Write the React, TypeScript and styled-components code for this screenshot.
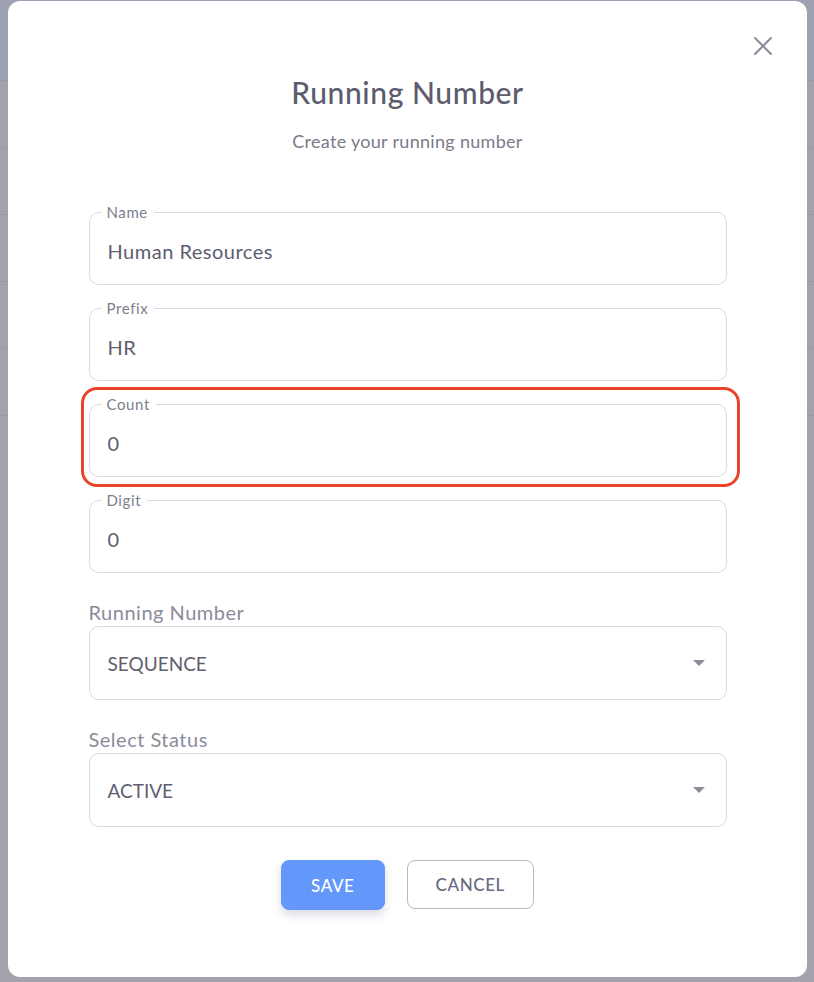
import * as React from "react";
import styled, { createGlobalStyle } from "styled-components";

const GlobalStyle = createGlobalStyle`
  html, body {
    margin: 0;
    padding: 0;
    background: #a2a3ad;
    font-family: Lato, "Noto Sans", sans-serif;
  }
  * { box-sizing: border-box; }
`;

const Page = styled.div`
  position: relative;
  width: 814px;
  height: 982px;
  overflow: hidden;
  background: #a2a3ad;
`;

const PageHeader = styled.div`
  height: 81px;
  background: #9ea1b1;
  border-bottom: 1px solid #979aa8;
`;

const PageRow = styled.div`
  height: 67px;
  border-bottom: 1px solid #989aa6;
`;

const Modal = styled.div`
  position: absolute;
  top: 1px;
  left: 8px;
  width: 799px;
  height: 976px;
  background: #fff;
  border-radius: 12px;
  padding: 73px 0 0;
  display: flex;
  flex-direction: column;
  align-items: center;
`;

const CloseButton = styled.button`
  position: absolute;
  top: 34px;
  right: 33px;
  width: 22px;
  height: 22px;
  padding: 0;
  border: none;
  background: none;
  display: flex;
  align-items: center;
  justify-content: center;
`;

const Title = styled.h2`
  margin: 0;
  font-size: 30px;
  line-height: 36px;
  font-weight: 500;
  letter-spacing: 0.6px;
  color: #5b5c6e;
`;

const Subtitle = styled.p`
  margin: 20px 0 0;
  font-size: 18px;
  line-height: 22px;
  letter-spacing: 0.3px;
  color: #7a7b8a;
`;

const Form = styled.div`
  width: 638px;
  margin-top: 52px;
  display: flex;
  flex-direction: column;
`;

const FieldWrap = styled.div<{ $gap?: number }>`
  position: relative;
  margin-top: ${(p) => p.$gap ?? 0}px;
`;

const Highlight = styled.div`
  position: absolute;
  top: -9px;
  left: -8px;
  right: -13px;
  bottom: -10px;
  border: 3px solid #e9432a;
  border-radius: 16px;
  pointer-events: none;
`;

const Fieldset = styled.fieldset`
  margin: 0;
  min-width: 0;
  padding: 0 18px;
  border: 1px solid #d8d9df;
  border-radius: 10px;
`;

const Legend = styled.legend`
  margin-left: -7px;
  padding: 0 6px;
  font-size: 15px;
  line-height: 16px;
  letter-spacing: 0.6px;
  color: #7d7e8e;
`;

const Input = styled.input`
  display: block;
  width: 100%;
  height: 64px;
  border: none;
  outline: none;
  padding: 0 0 2px;
  background: transparent;
  font-family: inherit;
  font-size: 20px;
  letter-spacing: 0.5px;
  color: #5c5d6f;
`;

const SelectLabel = styled.div`
  margin-top: 27px;
  font-size: 20px;
  line-height: 24px;
  letter-spacing: 0.5px;
  color: #8a8b9a;
`;

const SelectBox = styled.div`
  margin-top: 2px;
  height: 74px;
  border: 1px solid #d8d9df;
  border-radius: 10px;
  padding: 0 21px 0 18px;
  display: flex;
  align-items: center;
  justify-content: space-between;
  font-size: 19px;
  color: #5e5f70;
`;

const Caret = styled.span`
  width: 0;
  height: 0;
  border-left: 6px solid transparent;
  border-right: 6px solid transparent;
  border-top: 6px solid #8b8c98;
`;

const Actions = styled.div`
  margin-top: 33px;
  display: flex;
  justify-content: center;
  gap: 22px;
`;

const Button = styled.button<{ $primary?: boolean }>`
  height: ${(p) => (p.$primary ? 50 : 49)}px;
  padding: 0 ${(p) => (p.$primary ? 29 : 28)}px;
  border-radius: 8px;
  font-family: inherit;
  font-size: 17px;
  letter-spacing: 0.6px;
  font-weight: 500;
  cursor: pointer;
  border: 1px solid ${(p) => (p.$primary ? "#6397fa" : "#b7b9c5")};
  background: ${(p) => (p.$primary ? "#6397fa" : "#fff")};
  color: ${(p) => (p.$primary ? "#fff" : "#676a7e")};
  box-shadow: ${(p) => (p.$primary ? "0 5px 10px rgba(90,100,130,0.22)" : "none")};
`;

const fields = [
  { label: "Name", value: "Human Resources" },
  { label: "Prefix", value: "HR" },
  { label: "Count", value: "0", highlight: true },
  { label: "Digit", value: "0" },
];

export default function App() {
  return (
    <Page>
      <GlobalStyle />
      <PageHeader />
      {[0, 1, 2, 3, 4].map((i) => (
        <PageRow key={i} />
      ))}
      <Modal>
        <CloseButton aria-label="close">
          <svg width="20" height="20" viewBox="0 0 20 20">
            <path d="M2 2 L18 18 M18 2 L2 18" stroke="#8c8d9a" strokeWidth="2" strokeLinecap="round" />
          </svg>
        </CloseButton>
        <Title>Running Number</Title>
        <Subtitle>Create your running number</Subtitle>
        <Form>
          {fields.map((f, i) => (
            <FieldWrap key={f.label} $gap={i === 0 ? 0 : 15}>
              {f.highlight && <Highlight />}
              <Fieldset>
                <Legend>{f.label}</Legend>
                <Input defaultValue={f.value} />
              </Fieldset>
            </FieldWrap>
          ))}
          <SelectLabel>Running Number</SelectLabel>
          <SelectBox>
            SEQUENCE
            <Caret />
          </SelectBox>
          <SelectLabel>Select Status</SelectLabel>
          <SelectBox>
            ACTIVE
            <Caret />
          </SelectBox>
          <Actions>
            <Button $primary>SAVE</Button>
            <Button>CANCEL</Button>
          </Actions>
        </Form>
      </Modal>
    </Page>
  );
}
